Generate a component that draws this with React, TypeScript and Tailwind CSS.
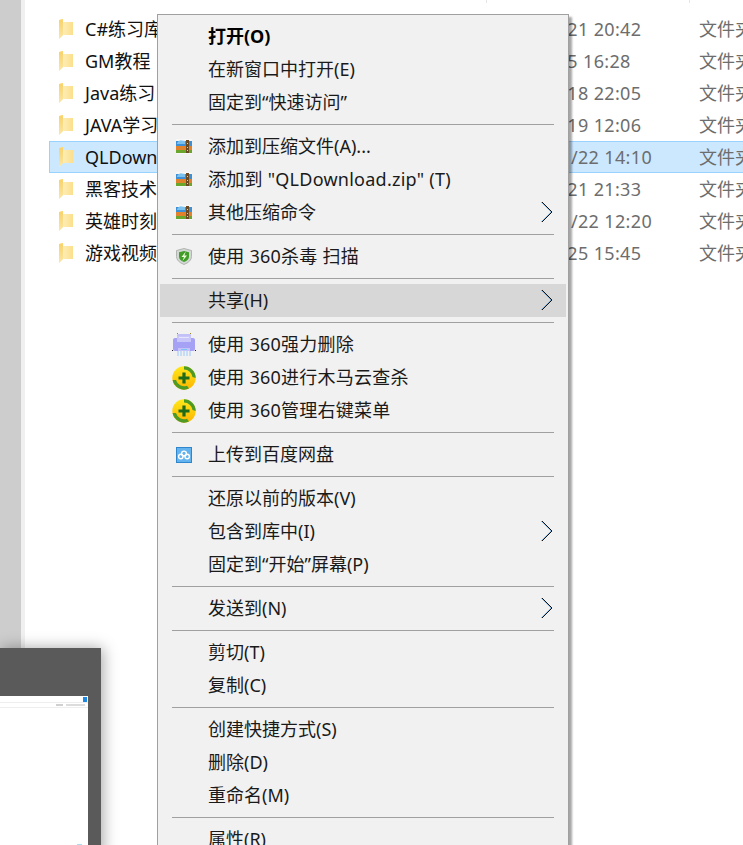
const files = [
  { name: "C#练习库", date: "2020/2/21 20:42" },
  { name: "GM教程", date: "2020/3/5 16:28" },
  { name: "Java练习", date: "2020/2/18 22:05" },
  { name: "JAVA学习", date: "2020/2/19 12:06" },
  { name: "QLDownload", date: "2020/11/22 14:10", selected: true },
  { name: "黑客技术", date: "2020/2/21 21:33" },
  { name: "英雄时刻", date: "2020/11/22 12:20" },
  { name: "游戏视频", date: "2020/2/25 15:45" },
];

function FolderIcon() {
  return (
    <svg width="16" height="22" viewBox="0 0 16 22" className="shrink-0">
      <defs>
        <linearGradient id="fold" x1="0" y1="0" x2="1" y2="0">
          <stop offset="0" stopColor="#fff3c4" />
          <stop offset="1" stopColor="#fbdf8c" />
        </linearGradient>
        <linearGradient id="foldBack" x1="0" y1="0" x2="0" y2="1">
          <stop offset="0" stopColor="#f8d26a" />
          <stop offset="1" stopColor="#fbe6a4" />
        </linearGradient>
      </defs>
      <path d="M1 2 L5 1 V4 H15 V17 H5 L1 21 Z" fill="url(#fold)" />
      <path d="M1 2 L5 1 V17 L1 21 Z" fill="url(#foldBack)" />
    </svg>
  );
}

function RarIcon() {
  return (
    <svg width="16" height="15" viewBox="0 0 16 15">
      <rect x="0" y="0" width="16" height="15" fill="#f7f7f7" />
      <rect x="0" y="2" width="16" height="5" fill="#3d8fd6" />
      <path d="M1 4 Q3 0.5 6 1.5 L9 2 V5 H1 Z" fill="#7cc0ee" />
      <rect x="0" y="7" width="16" height="4" fill="#e0812c" />
      <rect x="0" y="11" width="16" height="3" fill="#6aa52e" />
      <rect x="10" y="1" width="3" height="13" fill="#6b4a22" />
      <rect x="11" y="4" width="1" height="1" fill="#f0d070" />
      <rect x="11" y="8" width="1" height="1" fill="#f0d070" />
      <rect x="11" y="11" width="1" height="1" fill="#f0d070" />
    </svg>
  );
}

function ShieldIcon() {
  return (
    <svg width="16" height="17" viewBox="0 0 16 17">
      <path d="M8 0.5 L15.5 2.5 V8.5 Q15.5 13.5 8 16.5 Q0.5 13.5 0.5 8.5 V2.5 Z" fill="#d4d8d4" stroke="#a3a8a3" strokeWidth="0.8" />
      <path d="M8 3 L13 4.2 V8.5 Q13 12 8 14 Q3 12 3 8.5 V4.2 Z" fill="#3f9d28" />
      <path d="M9.8 3.5 L5.5 9 H8 L6.5 13 L11 7.5 H8.4 Z" fill="#eefbd8" />
    </svg>
  );
}

function ShredIcon() {
  return (
    <svg width="24" height="24" viewBox="0 0 24 24">
      <rect x="5" y="1" width="14" height="7" rx="1" fill="#c3c0f8" />
      <rect x="1" y="5" width="22" height="13" rx="2" fill="#a5a1f4" />
      <rect x="5" y="3" width="14" height="6" fill="#c9c6fa" />
      <rect x="7" y="4" width="10" height="1" fill="#e6e5fd" />
      <rect x="6" y="15" width="12" height="3" fill="#c4c2f9" />
      <rect x="9" y="16" width="6" height="1" fill="#7cc4f4" />
      <path d="M6 18 V23 M9 18 V23 M12 18 V23 M15 18 V23 M18 18 V23" stroke="#bcd6f8" strokeWidth="1.6" />
      <rect x="0" y="17" width="1" height="1" fill="#222" />
      <rect x="23" y="17" width="1" height="1" fill="#222" />
      <rect x="5" y="0" width="1" height="1" fill="#a08a20" />
      <rect x="18" y="0" width="1" height="1" fill="#a08a20" />
    </svg>
  );
}

function GreenPlusIcon({ id }: { id: string }) {
  return (
    <svg width="24" height="24" viewBox="0 0 24 24">
      <defs>
        <linearGradient id={id} x1="0" y1="0" x2="0" y2="1">
          <stop offset="0" stopColor="#ffe81a" />
          <stop offset="1" stopColor="#fdb400" />
        </linearGradient>
      </defs>
      <circle cx="12" cy="12" r="11.7" fill={`url(#${id})`} />
      <path d="M12 0.3 A11.7 11.7 0 0 1 23.7 12 L20.5 11 A8.5 8.5 0 0 0 12 3.5 Z" fill="#4e9a26" />
      <path d="M0.6 14 A11.7 11.7 0 0 0 17 22.6 L15 19.8 A8.5 8.5 0 0 1 4 14 Z" fill="#4e9a26" />
      <path d="M12 6.5 V17.5 M6.5 12 H17.5" stroke="#1f6b1a" strokeWidth="3.2" />
    </svg>
  );
}

function CloudIcon() {
  return (
    <svg width="16" height="16" viewBox="0 0 16 16">
      <rect x="0.5" y="0.5" width="15" height="15" fill="#63b3ee" stroke="#2f86cc" />
      <circle cx="8" cy="6.5" r="2.4" fill="none" stroke="#fff" strokeWidth="1.4" />
      <circle cx="4.8" cy="9.5" r="2.2" fill="none" stroke="#fff" strokeWidth="1.4" />
      <circle cx="11.2" cy="9.5" r="2.2" fill="none" stroke="#fff" strokeWidth="1.4" />
    </svg>
  );
}

function Chevron() {
  return (
    <svg width="14" height="22" viewBox="0 0 14 22" className="absolute left-[380px] top-[5px]">
      <path d="M1.6 1 L11.6 11 L1.6 21" fill="none" stroke="#0078d7" strokeWidth="1" />
      <path d="M2 1 L12 11 L2 21" fill="none" stroke="#111" strokeWidth="1" />
    </svg>
  );
}

function Item({
  label,
  icon,
  bold,
  arrow,
  active,
  wide,
}: {
  label: string;
  icon?: React.ReactNode;
  bold?: boolean;
  arrow?: boolean;
  active?: boolean;
  wide?: boolean;
}) {
  return (
    <div className={`relative mx-[2px] flex h-[33px] items-center ${active ? "bg-[#d7d7d7]" : ""}`}>
      <div className="flex w-[48px] shrink-0 justify-center">{icon}</div>
      <span className={`pb-[2px] ${bold ? "font-bold text-black" : ""} ${wide ? "tracking-[0.25px]" : ""}`}>{label}</span>
      {arrow && <Chevron />}
    </div>
  );
}

function Sep() {
  return <div className="mx-[14px] my-[5px] h-px bg-[#a0a0a0]" />;
}

function ContextMenu() {
  return (
    <div className="absolute left-[157px] top-[14px] h-[860px] w-[412px] border border-[#a0a0a0] bg-[#f1f1f1] pt-[5px] text-[#1a1a1a] shadow-[3px_3px_2px_rgba(0,0,0,0.35)]">
      <Item label="打开(O)" bold />
      <Item label="在新窗口中打开(E)" />
      <Item label="固定到“快速访问”" />
      <Sep />
      <Item label="添加到压缩文件(A)..." icon={<RarIcon />} />
      <Item label={'添加到 "QLDownload.zip" (T)'} icon={<RarIcon />} wide />
      <Item label="其他压缩命令" icon={<RarIcon />} arrow />
      <Sep />
      <Item label="使用 360杀毒 扫描" icon={<ShieldIcon />} wide />
      <Sep />
      <Item label="共享(H)" arrow active />
      <Sep />
      <Item label="使用 360强力删除" icon={<ShredIcon />} wide />
      <Item label="使用 360进行木马云查杀" icon={<GreenPlusIcon id="plus1" />} wide />
      <Item label="使用 360管理右键菜单" icon={<GreenPlusIcon id="plus2" />} wide />
      <Sep />
      <Item label="上传到百度网盘" icon={<CloudIcon />} />
      <Sep />
      <Item label="还原以前的版本(V)" />
      <Item label="包含到库中(I)" arrow />
      <Item label="固定到“开始”屏幕(P)" />
      <Sep />
      <Item label="发送到(N)" arrow />
      <Sep />
      <Item label="剪切(T)" />
      <Item label="复制(C)" />
      <Sep />
      <Item label="创建快捷方式(S)" />
      <Item label="删除(D)" />
      <Item label="重命名(M)" />
      <Sep />
      <Item label="属性(R)" />
    </div>
  );
}

function ThumbnailWindow() {
  return (
    <div className="absolute left-0 top-[648px] h-[210px] w-[101px] bg-[#5a5a5a] shadow-[2px_0_14px_rgba(0,0,0,0.35)]">
      <div className="relative mt-[48px] h-[149px] w-[88px] bg-white">
        <div className="flex h-[6px] justify-end pr-[1px] pt-[1px]">
          <div className="h-[5px] w-[4px] bg-[#1e88e5]" />
        </div>
        <div className="flex h-[6px] items-center justify-end gap-[3px] border-y border-[#eeeeee] pr-[3px]">
          <div className="h-[2px] w-[7px] bg-[#d0d0d0]" />
          <div className="h-[2px] w-[19px] bg-[#dcdcdc]" />
        </div>
        <div className="absolute bottom-0 right-[6px] h-px w-[5px] bg-[#a8dcf5]" />
      </div>
    </div>
  );
}

export default function App() {
  return (
    <div className="relative flex h-[845px] w-[743px] overflow-hidden bg-white font-['Noto_Sans','Noto_Sans_CJK_SC',sans-serif] text-[18px] leading-[24px]">
      <div className="w-[21px] shrink-0 bg-[#cdcdcd]" />
      <div className="w-[4px] shrink-0 bg-[#f0f0f0]" />
      <div className="min-w-0 flex-1 pl-[24px] pt-[13px]">
        {files.map((f) => (
          <div
            key={f.name}
            className={`flex h-[32px] w-[760px] items-center ${
              f.selected ? "border border-[#99d1ff] bg-[#cce8ff]" : "border border-transparent"
            }`}
          >
            <div className="ml-[8px] flex w-[27px] shrink-0">
              <FolderIcon />
            </div>
            <div className="w-[415px] shrink-0 text-[#111]">{f.name}</div>
            <div className="w-[199px] shrink-0 tracking-[0.35px] text-[#6d6d6d]">{f.date}</div>
            <div className="whitespace-nowrap text-[#6d6d6d]">文件夹</div>
          </div>
        ))}
      </div>
      <div className="absolute left-[486px] top-0 h-[3px] w-px bg-[#e5e5e5]" />
      <div className="absolute left-[689px] top-0 h-[3px] w-px bg-[#e5e5e5]" />
      <ThumbnailWindow />
      <ContextMenu />
    </div>
  );
}
